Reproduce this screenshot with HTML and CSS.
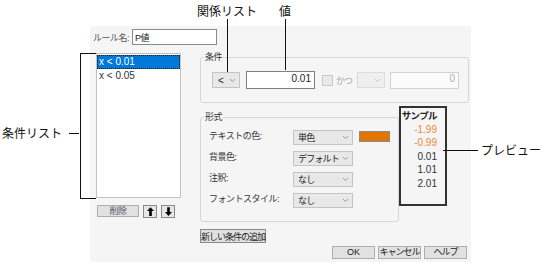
FILE: index.html
```html
<!DOCTYPE html>
<html lang="ja">
<head>
    <meta charset="UTF-8">
    <title>条件の書式</title>
    <link rel="stylesheet" href="styles.css">
</head>
<body>
    <div class="figure">
        <div class="dialog">
            <div class="name-row">
                <label class="name-label">ルール名:</label>
                <input type="text" class="name-input" value="P値">
            </div>

            <div class="main">
                <div class="list-col">
                    <ul class="cond-list">
                        <li class="selected">x &lt; 0.01</li>
                        <li>x &lt; 0.05</li>
                    </ul>
                    <div class="list-buttons">
                        <button class="btn btn-delete">削除</button>
                        <button class="btn btn-arrow">
                            <svg width="7" height="9" viewBox="0 0 8 10"><path d="M4 0 L8 4.5 H5.5 V10 H2.5 V4.5 H0 Z" fill="#000"/></svg>
                        </button>
                        <button class="btn btn-arrow">
                            <svg width="7" height="9" viewBox="0 0 8 10"><path d="M4 10 L8 5.5 H5.5 V0 H2.5 V5.5 H0 Z" fill="#000"/></svg>
                        </button>
                    </div>
                </div>

                <div class="right-col">
                    <fieldset class="group cond-group">
                        <legend>条件</legend>
                        <div class="cond-row">
                            <div class="dropdown dd-small">
                                <span class="num">&lt;</span>
                                <svg width="5" height="3" viewBox="0 0 5 3"><polyline points="0,0 2.5,2.5 5,0" fill="none" stroke="#999" stroke-width="1"/></svg>
                            </div>
                            <input type="text" class="value-input" value="0.01">
                            <span class="check"></span>
                            <span class="and-label">かつ</span>
                            <div class="dropdown dd-small disabled">
                                <span></span>
                                <svg width="5" height="3" viewBox="0 0 5 3"><polyline points="0,0 2.5,2.5 5,0" fill="none" stroke="#c4c4c4" stroke-width="1"/></svg>
                            </div>
                            <input type="text" class="value-input disabled" value="0" disabled>
                        </div>
                    </fieldset>

                    <div class="format-row">
                        <fieldset class="group format-group">
                            <legend>形式</legend>
                            <div class="format-grid">
                                <span class="field-label">テキストの色:</span>
                                <div class="dropdown">
                                    <span>単色</span>
                                    <svg width="5" height="3" viewBox="0 0 5 3"><polyline points="0,0 2.5,2.5 5,0" fill="none" stroke="#999" stroke-width="1"/></svg>
                                </div>
                                <span class="swatch"></span>

                                <span class="field-label">背景色:</span>
                                <div class="dropdown">
                                    <span>デフォルト</span>
                                    <svg width="5" height="3" viewBox="0 0 5 3"><polyline points="0,0 2.5,2.5 5,0" fill="none" stroke="#999" stroke-width="1"/></svg>
                                </div>
                                <span></span>

                                <span class="field-label">注釈:</span>
                                <div class="dropdown">
                                    <span>なし</span>
                                    <svg width="5" height="3" viewBox="0 0 5 3"><polyline points="0,0 2.5,2.5 5,0" fill="none" stroke="#999" stroke-width="1"/></svg>
                                </div>
                                <span></span>

                                <span class="field-label">フォントスタイル:</span>
                                <div class="dropdown">
                                    <span>なし</span>
                                    <svg width="5" height="3" viewBox="0 0 5 3"><polyline points="0,0 2.5,2.5 5,0" fill="none" stroke="#999" stroke-width="1"/></svg>
                                </div>
                                <span></span>
                            </div>
                        </fieldset>

                        <div class="preview">
                            <div class="preview-title">サンプル</div>
                            <div class="neg">-1.99</div>
                            <div class="neg">-0.99</div>
                            <div>0.01</div>
                            <div>1.01</div>
                            <div>2.01</div>
                        </div>
                    </div>

                    <button class="btn btn-add">新しい条件の追加</button>
                </div>
            </div>

            <div class="footer">
                <button class="btn btn-footer num">OK</button>
                <button class="btn btn-footer">キャンセル</button>
                <button class="btn btn-footer">ヘルプ</button>
            </div>
        </div>

        <!-- 注釈 -->
        <div class="callout callout-rel">関係リスト</div>
        <div class="callout callout-val">値</div>
        <div class="callout callout-list">条件リスト</div>
        <div class="callout callout-preview">プレビュー</div>
        <div class="line line-rel"></div>
        <div class="line line-val"></div>
        <div class="line line-dash"></div>
        <div class="line line-preview"></div>
        <div class="bracket"></div>
    </div>
</body>
</html>
```

FILE: styles.css
```css
body {
    margin: 0;
    font-family: "Liberation Sans", "Noto Sans CJK JP", sans-serif;
    color: #111;
    background: #fff;
}

.figure {
    position: relative;
    width: 545px;
    height: 265px;
    padding: 26px 0 0 90px;
    box-sizing: border-box;
}

.dialog {
    width: 381px;
    height: 236px;
    box-sizing: border-box;
    padding: 3px 4px 4px 3px;
    background: #f5f5f5;
    font-size: 9px;
    letter-spacing: -0.5px;
    color: #333;
}

.num {
    font-size: 10px;
    letter-spacing: 0;
}

/* ルール名 */
.name-row {
    display: flex;
    align-items: center;
    gap: 2px;
    height: 16px;
}

.name-label {
    width: 37px;
    white-space: nowrap;
    color: #555;
}

.name-input {
    width: 85px;
    height: 16px;
    box-sizing: border-box;
    margin: 0;
    padding: 0 2px;
    border: 1px solid #8a8a8a;
    background: #fff;
    font-family: inherit;
    font-size: 9px;
    letter-spacing: -0.5px;
    color: #222;
}

.main {
    display: flex;
    margin-top: 6px;
}

/* 条件リスト */
.list-col {
    width: 86px;
    margin-left: 3px;
    padding-top: 2px;
}

.cond-list {
    height: 145px;
    box-sizing: border-box;
    margin: 0;
    padding: 1px 0;
    list-style: none;
    background: #fff;
    border: 1px solid #c2c2c2;
}

.cond-list li {
    height: 14px;
    line-height: 14px;
    padding-left: 2px;
    font-size: 10px;
    letter-spacing: 0;
    color: #333;
}

.cond-list li.selected {
    background: #0078d7;
    color: #fff;
    outline: 1px dotted #1a1a1a;
    outline-offset: -1px;
}

.list-buttons {
    display: flex;
    gap: 4px;
    margin: 7px 0 0 1px;
}

.btn {
    margin: 0;
    padding: 0;
    border: 1px solid #adadad;
    background: #e1e1e1;
    font-family: inherit;
    font-size: 9px;
    letter-spacing: -0.5px;
    white-space: nowrap;
    color: #222;
    box-sizing: border-box;
}

.btn-delete {
    width: 42px;
    height: 12px;
    line-height: 10px;
    color: #556;
}

.btn-arrow {
    display: flex;
    align-items: center;
    justify-content: center;
    width: 14px;
    height: 13px;
    background: #e6e6e6;
    border-color: #888;
}

/* 右側 */
.right-col {
    width: 267px;
    margin-left: 19px;
}

.group {
    margin: 0;
    border: 1px solid #d6d6d6;
    border-radius: 3px;
}

.group legend {
    padding: 0 1px;
    line-height: 12px;
    color: #333;
}

.cond-group {
    padding: 8px 9px 13px 3px;
}

.cond-row {
    display: flex;
    align-items: center;
    height: 18px;
    margin-left: 8px;
}

.cond-row > * {
    flex-shrink: 0;
}

.dropdown {
    display: flex;
    align-items: center;
    justify-content: space-between;
    width: 60px;
    height: 15px;
    box-sizing: border-box;
    padding: 0 4px 0 4px;
    background: #e8e8e8;
    border: 1px solid #c4c4c4;
    letter-spacing: -0.8px;
    white-space: nowrap;
    color: #222;
}

.dd-small {
    width: 28px;
    height: 16px;
    padding-left: 5px;
}

.dropdown.disabled {
    background: #efefef;
    border-color: #dcdcdc;
}

.value-input {
    width: 69px;
    height: 18px;
    box-sizing: border-box;
    margin: 0 0 0 6px;
    padding: 0 3px 3px 0;
    border: 1px solid #7f7f7f;
    background: #fff;
    font-family: inherit;
    font-size: 10px;
    text-align: right;
    color: #222;
}

.value-input.disabled {
    height: 17px;
    margin-left: 5px;
    border-color: #d2d2d2;
    background: #fbfbfb;
    color: #b0b0b0;
}

.check {
    width: 11px;
    height: 11px;
    box-sizing: border-box;
    margin-left: 7px;
    border: 1px solid #c8c8c8;
    background: #e9e9e9;
}

.and-label {
    margin: 0 5px 0 3px;
    letter-spacing: -1px;
    white-space: nowrap;
    color: #a8a8a8;
}

/* 形式 */
.format-row {
    display: flex;
    align-items: flex-start;
    margin-top: 3px;
}

.format-group {
    width: 194px;
    box-sizing: border-box;
    margin-top: 5px;
    padding: 7px 8px 13px 3px;
}

.format-grid {
    display: grid;
    grid-template-columns: 78px 60px 31px;
    grid-auto-rows: 15px;
    column-gap: 6px;
    row-gap: 6px;
    margin-left: 5px;
}

.field-label {
    line-height: 12px;
    white-space: nowrap;
    color: #333;
}

.swatch {
    width: 31px;
    height: 11px;
    box-sizing: border-box;
    margin-top: 1px;
    background: #e37400;
    border: 1px solid #8a8a8a;
}

.preview {
    width: 48px;
    height: 100px;
    box-sizing: border-box;
    padding: 1px 8px 0 0;
    border: 2px solid #333;
    font-size: 10px;
    letter-spacing: 0;
    line-height: 13.5px;
    text-align: right;
    color: #333;
}

.preview-title {
    font-size: 9.5px;
    font-weight: bold;
    letter-spacing: -0.6px;
    white-space: nowrap;
    color: #222;
}

.preview .neg {
    color: #f0873a;
}

.btn-add {
    display: block;
    width: 66px;
    height: 14px;
    margin-top: 7px;
    border-color: #888;
    letter-spacing: -1px;
}

.footer {
    display: flex;
    justify-content: flex-end;
    gap: 3px;
    margin-top: 3px;
}

.btn-footer {
    width: 43px;
    height: 13px;
    line-height: 11px;
    letter-spacing: -1px;
}

.btn-footer.num {
    font-size: 9px;
    letter-spacing: 0;
}

/* 注釈 */
.callout {
    position: absolute;
    font-family: "Noto Sans CJK JP", sans-serif;
    font-size: 12px;
    line-height: 14px;
    color: #111;
}

.callout-rel { left: 197px; top: 4px; }
.callout-val { left: 279px; top: 4px; }
.callout-list { left: 2px; top: 126px; }
.callout-preview { left: 481px; top: 143px; }

.line {
    position: absolute;
    background: #111;
}

.line-rel { left: 227px; top: 19px; width: 1px; height: 53px; }
.line-val { left: 285px; top: 19px; width: 1px; height: 51px; }
.line-dash { left: 69px; top: 133px; width: 10px; height: 1px; }
.line-preview { left: 443px; top: 150px; width: 35px; height: 1px; }

.bracket {
    position: absolute;
    left: 80px;
    top: 53px;
    width: 15px;
    height: 144px;
    border: 1px solid #111;
    border-right: none;
}
```
